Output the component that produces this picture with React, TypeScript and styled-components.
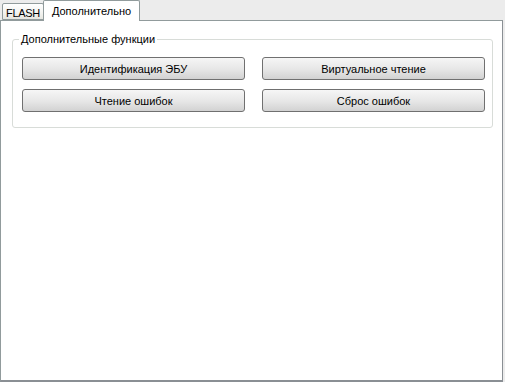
import React from "react";
import styled, { createGlobalStyle } from "styled-components";

const Global = createGlobalStyle`
  html, body { margin: 0; padding: 0; background: #ececec; }
  * { box-sizing: border-box; }
`;

const Window = styled.div`
  width: 505px;
  height: 382px;
  background: #ececec;
  display: flex;
  flex-direction: column;
  font-family: "Liberation Sans", Arial, sans-serif;
  font-size: 11px;
  color: #000;
`;

const TabStrip = styled.div`
  height: 21px;
  display: flex;
  align-items: flex-end;
  padding-left: 2px;
  margin-bottom: -1px;
  position: relative;
  z-index: 1;
`;

const Tab = styled.div<{ $active?: boolean }>`
  height: ${(p) => (p.$active ? "21px" : "17px")};
  padding-top: ${(p) => (p.$active ? "3px" : "2px")};
  margin-bottom: ${(p) => (p.$active ? "0" : "1px")};
  border: 1px solid #919b9c;
  border-bottom: ${(p) => (p.$active ? "none" : "1px solid #919b9c")};
  border-radius: 2px 2px 0 0;
  background: ${(p) =>
    p.$active ? "#ffffff" : "linear-gradient(#ffffff, #f3f3f0 60%, #e6e6e0)"};
  line-height: 14px;
  white-space: nowrap;
  text-align: center;
  letter-spacing: ${(p) => (p.$active ? "0" : "-0.3px")};
  width: ${(p) => (p.$active ? "97px" : "42px")};
  margin-left: ${(p) => (p.$active ? "-1px" : "0")};
`;

const Pane = styled.div`
  width: 503px;
  height: 362px;
  background: #ffffff;
  border: 1px solid #919b9c;
  border-right-color: #8a8f94;
  border-bottom: 2px solid #8a8f94;
  display: flex;
  flex-direction: column;
`;

const Group = styled.fieldset`
  margin: 12px 9px 0 11px;
  padding: 11px 8px 15px 9px;
  border: 1px solid #d8dcd8;
  border-radius: 3px;
  min-width: 0;
`;

const Legend = styled.legend`
  padding: 0 2px;
  margin-left: -3px;
  line-height: 13px;
`;

const ButtonGrid = styled.div`
  display: grid;
  grid-template-columns: 223px 223px;
  column-gap: 17px;
  row-gap: 9px;
`;

const Button = styled.button`
  height: 23px;
  border: 1px solid #707070;
  border-radius: 3px;
  background: linear-gradient(#f6f6f6, #e6e6e6 55%, #d2d2d2);
  font-family: inherit;
  font-size: 11px;
  color: #000;
  padding: 0;
  cursor: default;
`;

export default function App() {
  return (
    <Window>
      <Global />
      <TabStrip>
        <Tab>FLASH</Tab>
        <Tab $active>Дополнительно</Tab>
      </TabStrip>
      <Pane>
        <Group>
          <Legend>Дополнительные функции</Legend>
          <ButtonGrid>
            <Button>Идентификация ЭБУ</Button>
            <Button>Виртуальное чтение</Button>
            <Button>Чтение ошибок</Button>
            <Button>Сброс ошибок</Button>
          </ButtonGrid>
        </Group>
      </Pane>
    </Window>
  );
}
